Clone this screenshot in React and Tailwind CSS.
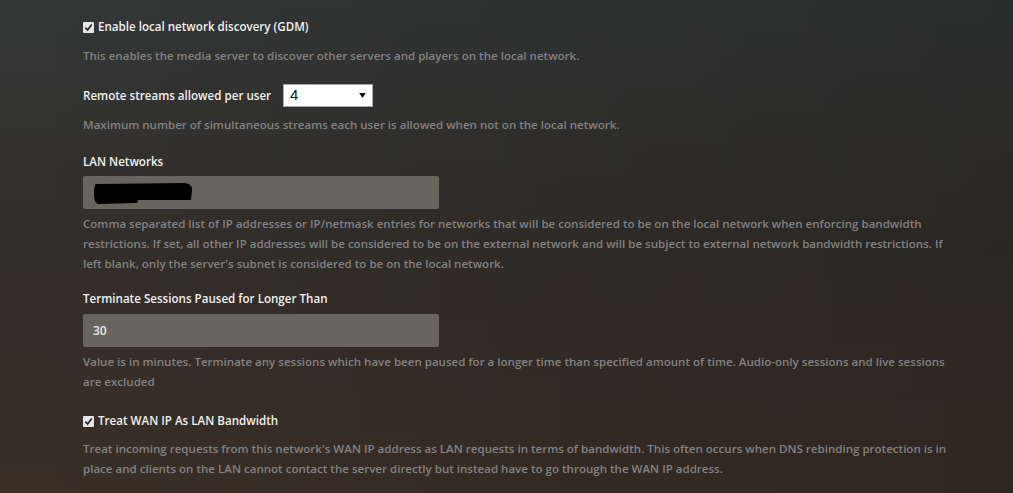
export default function App() {
  const Check = () => (
    <span className="w-[11px] h-[11px] bg-[#e6e6e6] rounded-[1px] flex items-center justify-center mr-[4px] shrink-0">
      <svg viewBox="0 0 10 10" className="w-[9px] h-[9px]">
        <path d="M1.5 5.2 L4 7.8 L8.6 1.6" fill="none" stroke="#222" strokeWidth="1.8" />
      </svg>
    </span>
  );

  const help = "text-[11.55px] leading-[20px] text-[#828282] font-semibold max-w-[868px]";
  const label = "text-[11.6px] leading-[20px] text-[#f0f0f0] font-semibold";
  const input =
    "w-[356px] h-[33px] rounded-[2px] bg-[#68655f] flex items-center px-[10px] text-[12px] text-[#e8e8e8] font-semibold";

  return (
    <div
      className="w-[1013px] h-[493px] overflow-hidden pl-[83px] pt-[17px] bg-[linear-gradient(to_right,rgba(0,0,0,0)_0%,rgba(0,0,0,0.18)_100%),linear-gradient(to_bottom,#343737_0%,#332f2b_50%,#3b2f26_100%)]"
      style={{ fontFamily: '"Open Sans", sans-serif' }}
    >
      {/* GDM */}
      <div className={`${label} flex items-center`}>
        <Check />
        Enable local network discovery (GDM)
      </div>
      <p className={`${help} mt-[9px]`}>
        This enables the media server to discover other servers and players on the local network.
      </p>

      {/* Remote streams */}
      <div className="flex items-center mt-[18px] h-[23px]">
        <span className={label}>Remote streams allowed per user</span>
        <div className="ml-[12px] w-[90px] h-[23px] bg-white border border-[#a9a9a9] flex items-center justify-between pl-[6px] pr-[6px]">
          <span className="text-[15px] text-[#111] font-normal" style={{ fontFamily: '"Liberation Sans", sans-serif' }}>4</span>
          <svg viewBox="0 0 8 6" className="w-[7px] h-[5px]">
            <path d="M0 0 H8 L4 6 Z" fill="#111" />
          </svg>
        </div>
      </div>
      <p className={`${help} mt-[8px]`}>
        Maximum number of simultaneous streams each user is allowed when not on the local network.
      </p>

      {/* LAN networks */}
      <div className={`${label} mt-[17px]`}>LAN Networks</div>
      <div className={`${input} mt-[4px] px-[5px]`}>
        <svg viewBox="0 0 100 24" className="w-[100px] h-[24px]">
          <path
            d="M3 3 L92 2 Q100 3 99 10 L98 19 L45 19 L44 22 L5 23 Q1 22 1 13 Q1 4 3 3 Z"
            fill="#000"
          />
        </svg>
      </div>
      <p className={`${help} mt-[5px]`}>
        Comma separated list of IP addresses or IP/netmask entries for networks that will be considered to be on the local network when enforcing bandwidth restrictions. If set, all other IP addresses will be considered to be on the external network and will be subject to external network bandwidth restrictions. If left blank, only the server's subnet is considered to be on the local network.
      </p>

      {/* Terminate sessions */}
      <div className={`${label} mt-[15px]`}>Terminate Sessions Paused for Longer Than</div>
      <div className={`${input} mt-[5px]`}>30</div>
      <p className={`${help} mt-[5px]`}>
        Value is in minutes. Terminate any sessions which have been paused for a longer time than specified amount of time. Audio-only sessions and live sessions are excluded
      </p>

      {/* WAN as LAN */}
      <div className={`${label} flex items-center mt-[19px]`}>
        <Check />
        Treat WAN IP As LAN Bandwidth
      </div>
      <p className={`${help} mt-[8px]`}>
        Treat incoming requests from this network's WAN IP address as LAN requests in terms of bandwidth. This often occurs when DNS rebinding protection is in place and clients on the LAN cannot contact the server directly but instead have to go through the WAN IP address.
      </p>
    </div>
  );
}
